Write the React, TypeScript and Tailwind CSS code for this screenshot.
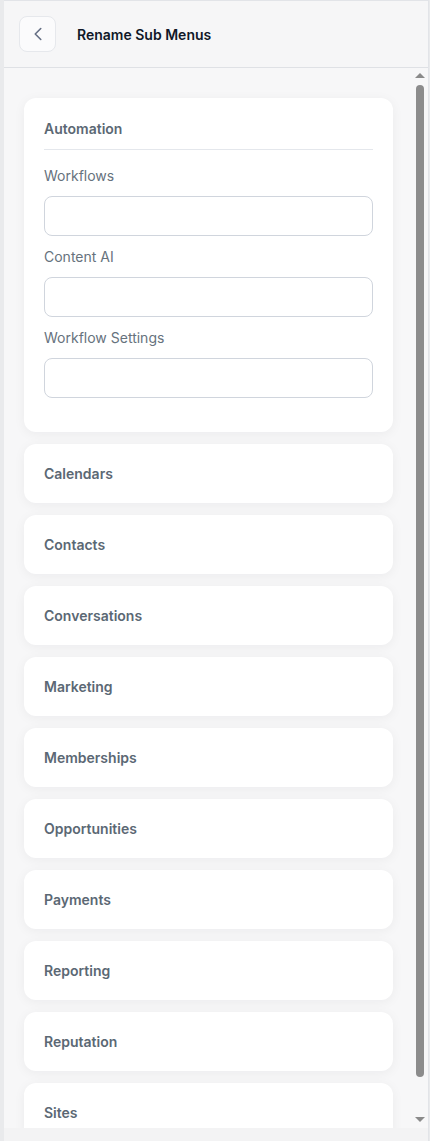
import { ChevronLeft } from "lucide-react"

const automationFields = ["Workflows", "Content AI", "Workflow Settings"]

const sections = [
  "Calendars",
  "Contacts",
  "Conversations",
  "Marketing",
  "Memberships",
  "Opportunities",
  "Payments",
  "Reporting",
  "Reputation",
  "Sites",
]

function Scrollbar() {
  return (
    <div className="flex w-[16px] shrink-0 flex-col items-center pt-[5px] pb-[6px]">
      <div className="h-0 w-0 border-x-[5px] border-b-[5px] border-x-transparent border-b-[#8a8a8a]" />
      <div className="mt-[7px] h-[992px] w-[8px] rounded-full bg-[#8c8c8c]" />
      <div className="flex-1" />
      <div className="h-0 w-0 border-x-[5px] border-t-[5px] border-x-transparent border-t-[#8a8a8a]" />
    </div>
  )
}

export default function App() {
  return (
    <div
      className="flex h-[1141px] w-[430px] overflow-hidden bg-[#e9eaec] pl-[4px]"
      style={{ fontFamily: "Inter, 'Noto Sans', sans-serif" }}
    >
      <div className="flex w-[425px] flex-col border-t border-r border-[#e2e4e8] bg-[#f3f3f4]">
        <header className="flex h-[67px] shrink-0 items-center gap-[21px] border-b border-[#dfe1e5] bg-[#f6f6f7] pl-[15px]">
          <button className="flex h-[36px] w-[37px] items-center justify-center rounded-lg border border-[#e6e8ec] bg-[#fbfbfc]">
            <ChevronLeft className="size-[22px] text-[#667085]" strokeWidth={1.75} />
          </button>
          <h1 className="text-[14px] font-semibold text-[#101828]">Rename Sub Menus</h1>
        </header>

        <div className="flex h-[1060px] shrink-0 overflow-hidden bg-[#f7f7f8]">
          <div className="flex flex-1 flex-col gap-3 pt-[30px] pl-[20px] pr-[19px]">
            <section className="rounded-xl bg-white px-5 pt-[21px] pb-[34px] shadow-[0_2px_12px_rgba(16,24,40,0.05)]">
              <h2 className="text-[14px] leading-5 font-semibold text-[#5b6874]">Automation</h2>
              <div className="mt-[10px] border-t border-[#e4e7ec]" />
              <div className="mt-[16px] flex flex-col gap-[11px]">
                {automationFields.map((field) => (
                  <label key={field} className="flex flex-col gap-[10px]">
                    <span className="text-[14px] leading-5 text-[#66727d]">{field}</span>
                    <input
                      type="text"
                      className="h-[40px] w-full rounded-lg border border-[#d0d5dd] bg-white px-3 text-[14px] outline-none"
                    />
                  </label>
                ))}
              </div>
            </section>

            {sections.map((name) => (
              <section
                key={name}
                className="flex h-[59px] shrink-0 items-center rounded-xl bg-white px-5 shadow-[0_2px_12px_rgba(16,24,40,0.05)]"
              >
                <h2 className="text-[14px] leading-5 font-semibold text-[#5b6874]">{name}</h2>
              </section>
            ))}
          </div>
          <Scrollbar />
        </div>

        <div className="flex-1 bg-[#f3f3f4]" />
      </div>
    </div>
  )
}
